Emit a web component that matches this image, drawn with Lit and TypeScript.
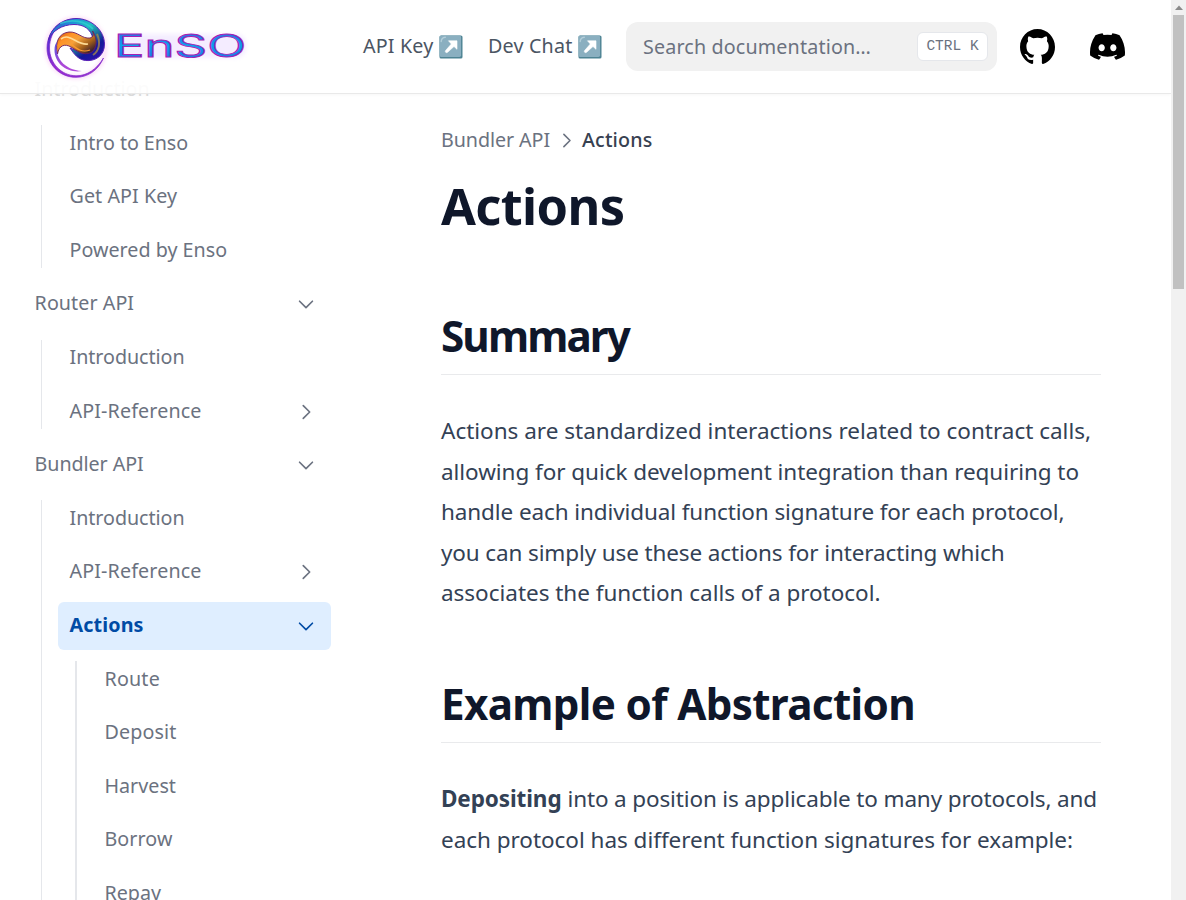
import { LitElement, html, svg, css, nothing } from "lit";
import { customElement, property } from "lit/decorators.js";

/* Text run that tracks its letters so that it fills a given width. */
@customElement("fit-text")
class FitText extends LitElement {
  @property({ type: Number }) w = 0;
  @property() text = "";
  static styles = css`
    :host { display: inline-block; white-space: pre; }
  `;
  render() {
    return html`<span>${this.text}</span>`;
  }
  updated() {
    const span = this.renderRoot.querySelector("span") as HTMLElement;
    const natural = span.getBoundingClientRect().width;
    this.style.letterSpacing = `${(this.w - natural) / this.text.length}px`;
  }
}

const fit = (text: string, w: number) => html`<fit-text .text=${text} .w=${w}></fit-text>`;

interface Item {
  label: string;
  w: number;
  icon?: "down" | "right";
  active?: boolean;
  faded?: boolean;
  deep?: boolean;
  children?: Item[];
}

const MENU: Item[] = [
  {
    label: "Introduction", w: 115, faded: true,
    children: [
      { label: "Intro to Enso", w: 118.5 },
      { label: "Get API Key", w: 107.5 },
      { label: "Powered by Enso", w: 157.5 },
    ],
  },
  {
    label: "Router API", w: 99.5, icon: "down",
    children: [
      { label: "Introduction", w: 115 },
      { label: "API-Reference", w: 132, icon: "right" },
    ],
  },
  {
    label: "Bundler API", w: 109, icon: "down",
    children: [
      { label: "Introduction", w: 115 },
      { label: "API-Reference", w: 132, icon: "right" },
      {
        label: "Actions", w: 74, icon: "down", active: true, deep: true,
        children: [
          { label: "Route", w: 55.5 },
          { label: "Deposit", w: 72 },
          { label: "Harvest", w: 71.5 },
          { label: "Borrow", w: 68 },
          { label: "Repay", w: 56.5 },
        ],
      },
    ],
  },
];

const chevron = (dir: "down" | "right", cls = "chev") => html`
  <svg class=${cls} viewBox="0 0 24 24" fill="none" stroke="currentColor" stroke-width="1.800" stroke-linecap="round" stroke-linejoin="round">
    ${dir === "down" ? svg`<path d="M19 9l-7 7-7-7"/>` : svg`<path d="M9 5l7 7-7 7"/>`}
  </svg>`;

const emoji = html`
  <svg class="emoji" viewBox="0 0 24 24">
    <rect x="0.5" y="0.5" width="23" height="23" rx="1.600" fill="#4d8393"/>
    <rect x="0.5" y="0.5" width="21.600" height="21.400" rx="1.600" fill="#8aafc0"/>
    <path d="M2.200 6.500Q2.400 2.600 6.300 2.200" stroke="#b3ced9" stroke-width="1.400" fill="none" stroke-linecap="round"/>
    <path d="M9.500 5.800H18V14.300L15 11.500L8.600 17.300Q7.200 18 6.600 17.200Q6 16.400 6.600 15.500L12.300 9Z" fill="#fff" stroke="#fff" stroke-width=".6" stroke-linejoin="round"/>
  </svg>`;

const logo = html`
  <svg class="logo" viewBox="0 0 230 93">
    <defs>
      <linearGradient id="ring" x1="0" y1="0" x2="1" y2="1">
        <stop offset="0" stop-color="#4a25c0"/>
        <stop offset=".25" stop-color="#1f8fd8"/>
        <stop offset=".45" stop-color="#22c0c0"/>
        <stop offset=".62" stop-color="#1b6a9a"/>
        <stop offset=".75" stop-color="#14189a"/>
        <stop offset="1" stop-color="#3a12b0"/>
      </linearGradient>
      <linearGradient id="rim" x1="0" y1="0" x2="1" y2="1">
        <stop offset="0" stop-color="#3b35d8"/>
        <stop offset=".5" stop-color="#9a28d0"/>
        <stop offset="1" stop-color="#a52bd4"/>
      </linearGradient>
      <linearGradient id="fire" x1="0" y1="0" x2="1" y2=".8">
        <stop offset="0" stop-color="#c4420a"/>
        <stop offset=".3" stop-color="#ff9326"/>
        <stop offset=".5" stop-color="#f5a03a"/>
        <stop offset=".75" stop-color="#a3601a"/>
        <stop offset="1" stop-color="#2a1535"/>
      </linearGradient>
      <linearGradient id="word" x1="0" y1="0" x2="0" y2="1">
        <stop offset="0" stop-color="#3d55e0"/>
        <stop offset=".5" stop-color="#0da0ee"/>
        <stop offset="1" stop-color="#2960e4"/>
      </linearGradient>
      <filter id="glow" x="-20%" y="-20%" width="140%" height="140%">
        <feGaussianBlur stdDeviation="2"/>
      </filter>
    </defs>
    <circle cx="46" cy="48" r="29" fill="none" stroke="#f49ae8" stroke-width="3" opacity=".5" filter="url(#glow)"/>
    <rect x="86" y="34" width="130" height="24" rx="10" fill="#c9a5ff" opacity=".2" filter="url(#glow)"/>
    <!-- thin outer sweep -->
    <path d="M73.500 58C68 71 57 77.300 46 77.300C29 77.300 17 64 17 48C17 38 22 29 30 23.500C23 31 19.500 39 19.500 48C19.500 63 31 75.500 46 75.800C57 76 67 69 73.500 58Z" fill="url(#rim)" stroke="#7a28c8" stroke-width=".7"/>
    <!-- heavy crescent -->
    <path d="M18.500 40C21 27 33 18.500 46 18.500C62 18.500 74.500 31 74.500 44C74.500 56 65 61.500 55.500 60.500C48 59.500 44 54 40 48L52 53C60 53 64 47 63 39C61 29 54 24.500 44 24.500C32 24.500 22 31 18.500 40Z" fill="url(#ring)" stroke="#5a22b8" stroke-width="1"/>
    <path d="M30 23.500C42 18.500 55 21 63 29" fill="none" stroke="#2fd5d0" stroke-width="1.800" opacity=".7"/>
    <path d="M67 34C71 43 69 51 63 55" fill="none" stroke="#b3963f" stroke-width="2" opacity=".7"/>
    <!-- inner flame -->
    <path d="M27.500 54C24.500 42 29 33 39 32C48 31.500 52 39 60 38C63.500 37 64 34 62.500 31C68 39 67 49 61 52.500C53 56.500 46 50 41 47C35 43.500 29 45 27.500 54Z" fill="url(#fire)" stroke="#6b1d5f" stroke-width=".9"/>
    <path d="M31 39C40 32 47 46 58 44" fill="none" stroke="#ffdc96" stroke-width="1.600"/>
    <path d="M41 44C47 49 52 53 60 50" fill="none" stroke="#ff9a2e" stroke-width="1.200"/>
    <!-- thin inner sweep -->
    <path d="M27 42C24 57 34 70 52 71C38 73.500 24.500 64 24.500 50C24.500 46 25.500 43.500 27 42Z" fill="url(#rim)" opacity=".85"/>
    <g class="word" fill="url(#word)" stroke="#a51fb4" stroke-width=".9">
      <text x="84" y="57" textLength="132" lengthAdjust="spacingAndGlyphs">EnSO</text>
    </g>
  </svg>`;

const github = html`
  <svg class="brand" viewBox="3 3 18 18" fill="#000">
    <path d="M12 3C7.0275 3 3 7.12937 3 12.2276C3 16.3109 5.57625 19.7597 9.15374 20.9824C9.60374 21.0631 9.77249 20.7863 9.77249 20.5441C9.77249 20.3249 9.76125 19.5982 9.76125 18.8254C7.5 19.2522 6.915 18.2602 6.735 17.7412C6.63375 17.4759 6.19499 16.6569 5.8125 16.4378C5.4975 16.2647 5.0475 15.838 5.80124 15.8264C6.51 15.8149 7.01625 16.4954 7.18499 16.7723C7.99499 18.1679 9.28875 17.7758 9.80625 17.5335C9.885 16.9337 10.1212 16.53 10.38 16.2993C8.3775 16.0687 6.285 15.2728 6.285 11.7432C6.285 10.7397 6.63375 9.9092 7.20749 9.26326C7.1175 9.03257 6.8025 8.08674 7.2975 6.81794C7.2975 6.81794 8.05125 6.57571 9.77249 7.76377C10.4925 7.55615 11.2575 7.45234 12.0225 7.45234C12.7875 7.45234 13.5525 7.55615 14.2725 7.76377C15.9937 6.56418 16.7475 6.81794 16.7475 6.81794C17.2424 8.08674 16.9275 9.03257 16.8375 9.26326C17.4113 9.9092 17.76 10.7281 17.76 11.7432C17.76 15.2843 15.6563 16.0687 13.6537 16.2993C13.98 16.5877 14.2613 17.1414 14.2613 18.0065C14.2613 19.2407 14.25 20.2326 14.25 20.5441C14.25 20.7863 14.4188 21.0746 14.8688 20.9824C18.5 19.7 21 16.3 21 12.2276C21 7.12937 16.9725 3 12 3Z"/>
  </svg>`;

const discord = html`
  <svg class="brand" viewBox="0 0 24 24" fill="#000">
    <path d="M20.317 4.370a19.790 19.790 0 0 0-4.885-1.515.074.074 0 0 0-.079.037c-.21.375-.444.864-.608 1.250a18.270 18.270 0 0 0-5.487 0 12.640 12.640 0 0 0-.617-1.250.077.077 0 0 0-.079-.037A19.736 19.736 0 0 0 3.677 4.370a.07.07 0 0 0-.032.027C.533 9.046-.32 13.580.099 18.057a.082.082 0 0 0 .031.057 19.900 19.900 0 0 0 5.993 3.030.078.078 0 0 0 .084-.028 14.090 14.090 0 0 0 1.226-1.994.076.076 0 0 0-.041-.106 13.107 13.107 0 0 1-1.872-.892.077.077 0 0 1-.008-.128 10.200 10.200 0 0 0 .372-.292.074.074 0 0 1 .077-.010c3.928 1.793 8.180 1.793 12.062 0a.074.074 0 0 1 .078.010c.12.098.246.198.373.292a.077.077 0 0 1-.006.127 12.299 12.299 0 0 1-1.873.892.077.077 0 0 0-.041.107c.36.698.772 1.362 1.225 1.993a.076.076 0 0 0 .084.028 19.839 19.839 0 0 0 6.002-3.030.077.077 0 0 0 .032-.054c.5-5.177-.838-9.674-3.549-13.660a.061.061 0 0 0-.031-.030zM8.020 15.330c-1.183 0-2.157-1.085-2.157-2.419 0-1.333.956-2.419 2.157-2.419 1.210 0 2.176 1.096 2.157 2.420 0 1.333-.956 2.418-2.157 2.418zm7.975 0c-1.183 0-2.157-1.085-2.157-2.419 0-1.333.955-2.419 2.157-2.419 1.210 0 2.176 1.096 2.157 2.420 0 1.333-.946 2.418-2.157 2.418z"/>
  </svg>`;

@customElement("app-root")
class AppRoot extends LitElement {
  static styles = css`
    * { box-sizing: border-box; }
    :host {
      display: flex; width: 1186px; height: 900px; overflow: hidden; background: #fff;
      font-family: "Noto Sans", "Open Sans", sans-serif; font-size: 19.7px; color: #6b7280;
    }
    .page { width: 1171px; height: 900px; overflow: hidden; }
    .header {
      position: relative; z-index: 2; height: 93px; display: flex; align-items: center;
      background: rgba(255, 255, 255, .88); box-shadow: 0 1px 0 #e9e9e9, 0 2px 3px rgba(0, 0, 0, .035);
    }
    .logo { width: 230px; height: 93px; margin-left: 30px; flex: none; display: block; }
    .word text { font: 400 31px "Inter", "Noto Sans", sans-serif; }
    .nav { display: flex; align-items: center; margin-left: 103px; gap: 25px; color: #4b5563; line-height: 26px; }
    .link { display: flex; align-items: center; }
    .link fit-text { transform: translateY(-1.500px); }
    .emoji { width: 24px; height: 24px; margin-left: 5.500px; display: block; }
    .search {
      width: 371px; height: 49px; margin-left: 24px; padding: 0 9px 0 17px; border-radius: 12px; background: #f1f1f1;
      display: flex; align-items: center; justify-content: space-between;
    }
    .search fit-text { transform: translateY(-.5px); }
    .kbd {
      width: 71px; height: 29px; border: 1px solid #e5e7eb; border-radius: 6px; background: #fff; text-align: center;
      font: 14.5px/26px "Liberation Mono", monospace; color: #6b7280;
    }
    .brand { width: 35px; height: 35px; display: block; }
    .icons { display: flex; gap: 35px; margin-left: 23px; }
    .body { display: flex; height: 834px; margin-top: -26.900px; }
    .side { width: 331px; padding-left: 23.200px; flex: none; }
    .list, .sub { display: flex; flex-direction: column; gap: 5.800px; }
    .row {
      height: 47.800px; padding: 0 11.600px 2px 11.400px; border-radius: 6px; line-height: 45.800px;
      display: flex; justify-content: space-between; align-items: center;
    }
    .faded { color: #ddd; }
    .active { background: #dfeeff; color: #004ba5; font-weight: 700; }
    .chev { width: 22px; height: 22px; margin-right: 2px; position: relative; top: 1px; }
    .group { display: flex; margin-top: 5.800px; }
    .rail { width: 1px; margin: 5.500px 16.200px 6.600px 17.800px; background: #e5e7eb; flex: none; }
    .rail.deep { width: 2px; margin-left: 17px; margin-right: 15.900px; }
    .sub { flex: 1; }
    .main { width: 660px; margin-left: 110px; padding-top: 56px; color: #334155; }
    .crumbs { display: flex; align-items: center; height: 36px; line-height: 36px; color: #6b7280; }
    .crumbs .chev { margin: 0 5px 0 6px; width: 21px; height: 21px; top: 0; }
    .crumbs .here { font-weight: 500; color: #374151; }
    h1, h2, p { margin: 0; }
    h1, h2 { color: #0f172a; font-weight: 700; }
    h1 { font-size: 50.500px; line-height: 60px; margin-top: 18px; }
    h2 { font-size: 42.200px; line-height: 54px; border-bottom: 1px solid #e9eaec; }
    h2 fit-text, h1 fit-text, p fit-text { vertical-align: top; }
    .first { height: 66px; margin-top: 73px; }
    .second { height: 66px; margin-top: 63px; }
    p { font-size: 22.500px; line-height: 40.600px; margin-top: 36px; }
    .line { display: flex; gap: 6px; height: 40.600px; }
    b { font-weight: 700; }
    .scroll { width: 15px; height: 900px; background: #f1f1f1; display: flex; flex-direction: column; align-items: center; }
    .arrow { width: 8px; height: 15px; padding-top: 5px; }
    .arrow svg { display: block; width: 8px; height: 5px; }
    .thumb { width: 11px; height: 274px; background: #c1c1c1; }
  `;

  item(i: Item): unknown {
    return html`<div>
      <div class="row ${i.active ? "active" : ""} ${i.faded ? "faded" : ""}">
        ${fit(i.label, i.w)}${i.icon ? chevron(i.icon) : nothing}
      </div>
      ${i.children
        ? html`<div class="group">
            <div class="rail ${i.deep ? "deep" : ""}"></div>
            <div class="sub">${i.children.map((c) => this.item(c))}</div>
          </div>`
        : nothing}
    </div>`;
  }

  render() {
    return html`
      <div class="page">
        <header class="header">
          ${logo}
          <nav class="nav">
            <span class="link">${fit("API Key", 70.5)}${emoji}</span>
            <span class="link">${fit("Dev Chat", 84.5)}${emoji}</span>
          </nav>
          <div class="search">${fit("Search documentation…", 228)}<span class="kbd">CTRL K</span></div>
          <div class="icons">${github}${discord}</div>
        </header>
        <div class="body">
          <aside class="side"><div class="list">${MENU.map((m) => this.item(m))}</div></aside>
          <main class="main">
            <div class="crumbs">${fit("Bundler API", 109)}${chevron("right")}<span class="here">${fit("Actions", 70.5)}</span></div>
            <h1>${fit("Actions", 183.5)}</h1>
            <h2 class="first">${fit("Summary", 188)}</h2>
            <p>
              ${[
                ["Actions are standardized interactions related to contract calls,", 650],
                ["allowing for quick development integration than requiring to", 638],
                ["handle each individual function signature for each protocol,", 623.5],
                ["you can simply use these actions for interacting which", 563.5],
                ["associates the function calls of a protocol.", 439.5],
              ].map(([t, w]) => html`<span class="line">${fit(t as string, w as number)}</span>`)}
            </p>
            <h2 class="second">${fit("Example of Abstraction", 474)}</h2>
            <p>
              <span class="line"><b>${fit("Depositing", 120.5)}</b>${fit("into a position is applicable to many protocols, and", 529.5)}</span>
              <span class="line">${fit("each protocol has different function signatures for example:", 632)}</span>
            </p>
          </main>
        </div>
      </div>
      <div class="scroll">
        <div class="arrow"><svg viewBox="0 0 8 5"><path d="M0 5L4 0.500L8 5Z" fill="#8a8a8a"/></svg></div>
        <div class="thumb"></div>
      </div>`;
  }
}
